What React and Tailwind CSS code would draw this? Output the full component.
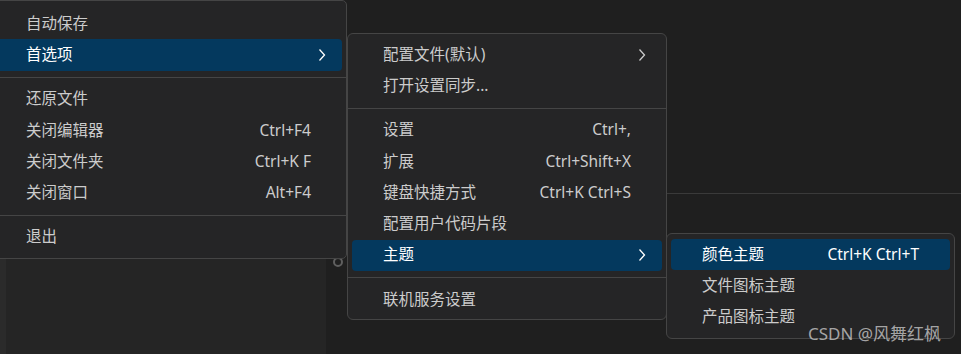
import React from "react";

const Chevron = ({ white }) => (
  <svg width="8" height="14" viewBox="0 0 8 14" className="absolute right-[16px] top-1/2 -translate-y-1/2">
    <path d="M1.5 1.5 L6.5 7 L1.5 12.5" fill="none" stroke={white ? "#ffffff" : "#cccccc"} strokeWidth="1.3" />
  </svg>
);

const Item = ({ label, shortcut, active, sub }) => (
  <div
    className={`relative mx-[4px] h-[31.25px] flex items-center justify-between pl-[31px] pr-[31px] rounded-[4px] ${
      active ? "bg-[#04395e] text-white" : "text-[#cccccc]"
    }`}
  >
    <span>{label}</span>
    {shortcut && <span>{shortcut}</span>}
    {sub && <Chevron white={active} />}
  </div>
);

const Sep = () => <div className="h-px bg-[#454545] my-[6px]" />;

export default function App() {
  return (
    <div
      className="relative w-[961px] h-[354px] overflow-hidden bg-[#1f1f1f] text-[15.5px] leading-none"
      style={{ fontFamily: "'Noto Sans', 'Noto Sans CJK SC', sans-serif" }}
    >
      {/* background workbench */}
      <div className="flex h-full">
        <div className="w-[6px] bg-[#2b2b2b]" />
        <div className="w-[320px] bg-[#252525]" />
        <div className="w-[340px]" />
        <div className="flex-1 flex flex-col">
          <div className="h-[194px] border-b border-[#3a3a3a]" />
        </div>
      </div>

      {/* small ring */}
      <div className="absolute left-[333px] top-[257px] w-[10px] h-[10px] rounded-full border-2 border-[#5f5f5f]" />

      {/* main menu */}
      <div className="absolute left-[-10px] top-0 w-[357px] bg-[#252526] border border-[#454545] rounded-[5px] pt-[7px] pb-[5px]">
        <Item label="自动保存" />
        <Item label="首选项" active sub />
        <Sep />
        <Item label="还原文件" />
        <Item label="关闭编辑器" shortcut="Ctrl+F4" />
        <Item label="关闭文件夹" shortcut="Ctrl+K F" />
        <Item label="关闭窗口" shortcut="Alt+F4" />
        <Sep />
        <Item label="退出" />
      </div>

      {/* preferences submenu */}
      <div className="absolute left-[347px] top-[33px] w-[320px] bg-[#252526] border border-[#454545] rounded-[6px] pt-[5px] pb-[4px]">
        <Item label="配置文件(默认)" sub />
        <Item label="打开设置同步..." />
        <Sep />
        <Item label="设置" shortcut="Ctrl+," />
        <Item label="扩展" shortcut="Ctrl+Shift+X" />
        <Item label="键盘快捷方式" shortcut="Ctrl+K Ctrl+S" />
        <Item label="配置用户代码片段" />
        <Item label="主题" active sub />
        <Sep />
        <Item label="联机服务设置" />
      </div>

      {/* theme submenu */}
      <div className="absolute left-[666px] top-[233px] w-[289px] bg-[#252526] border border-[#454545] rounded-[6px] py-[5px]">
        <Item label="颜色主题" shortcut="Ctrl+K Ctrl+T" active />
        <Item label="文件图标主题" />
        <Item label="产品图标主题" />
      </div>

      {/* watermark */}
      <div className="absolute left-[808px] top-[325px] text-[17px] leading-none text-[#c8c8c8]/80 whitespace-nowrap">
        CSDN @风舞红枫
      </div>
    </div>
  );
}
